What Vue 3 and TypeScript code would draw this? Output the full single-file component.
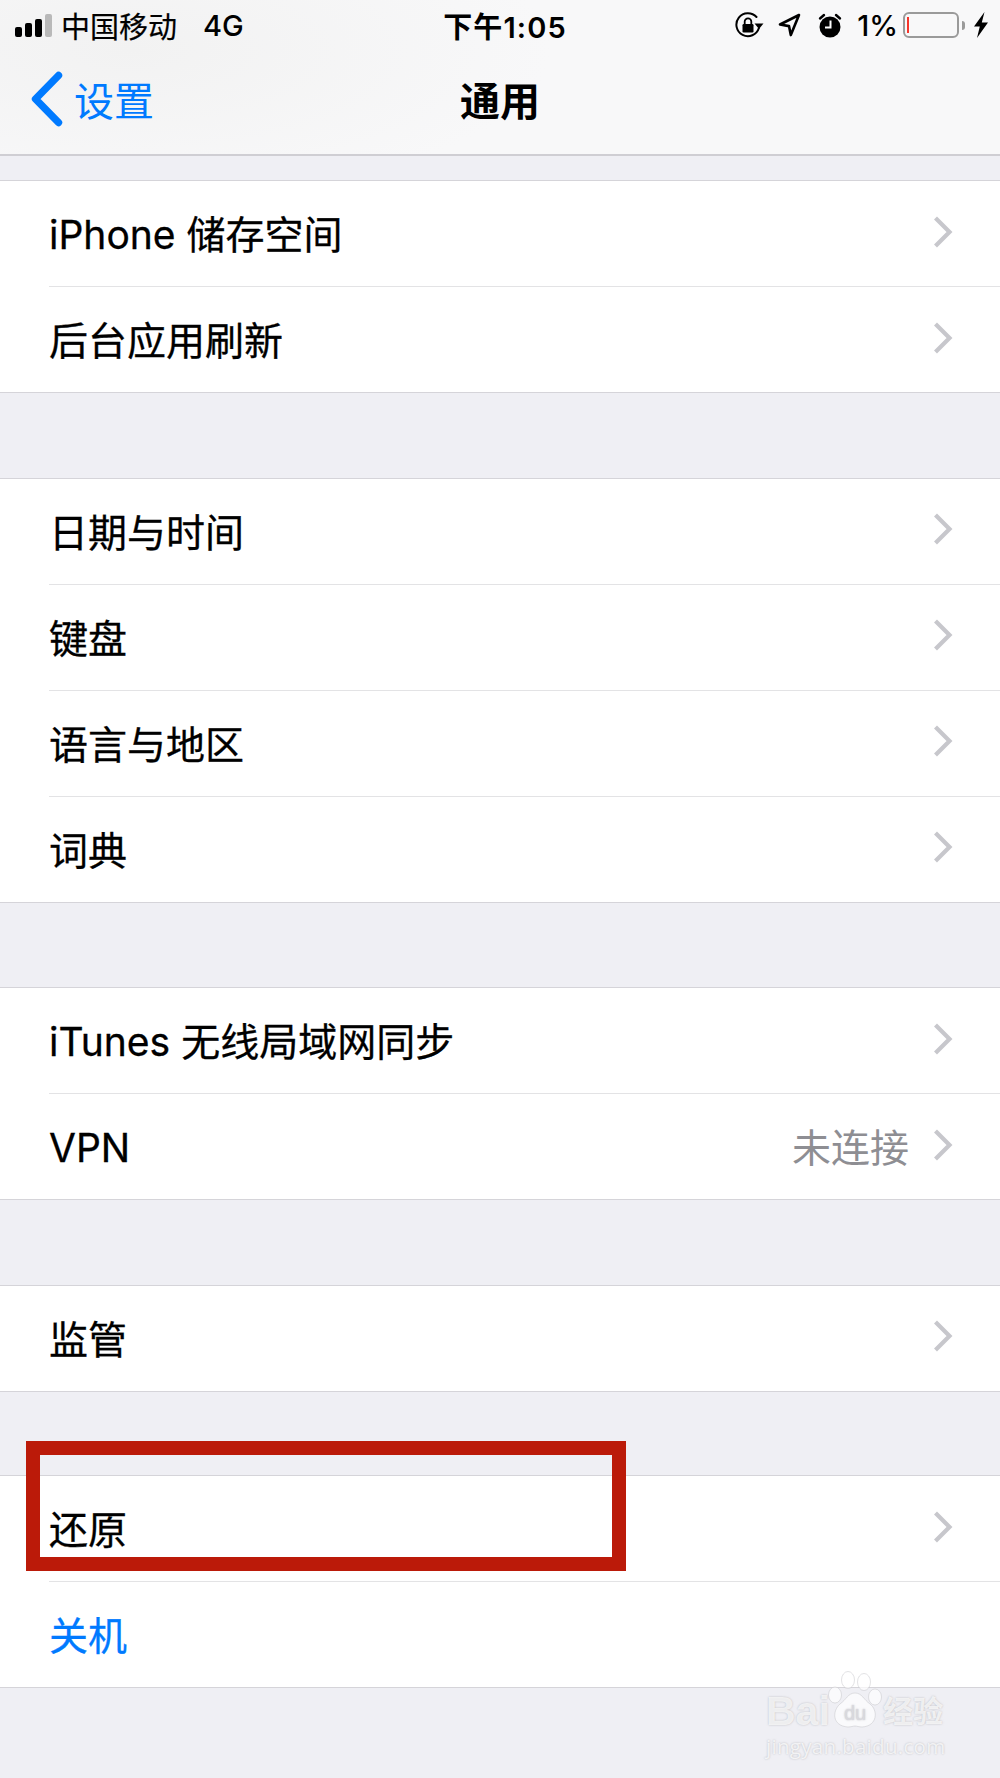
<script setup lang="ts">
interface Row {
  label: string;
  value?: string;
  link?: boolean;
}

const groups: Row[][] = [
  [{ label: "iPhone 储存空间" }, { label: "后台应用刷新" }],
  [{ label: "日期与时间" }, { label: "键盘" }, { label: "语言与地区" }, { label: "词典" }],
  [{ label: "iTunes 无线局域网同步" }, { label: "VPN", value: "未连接" }],
  [{ label: "监管" }],
  [{ label: "还原" }, { label: "关机", link: true }],
];
</script>

<template>
  <div class="page">
    <header class="top">
      <div class="status">
        <div class="status-left">
          <span class="signal">
            <i class="b1"></i><i class="b2"></i><i class="b3"></i><i class="b4"></i>
          </span>
          <span class="carrier">中国移动</span>
          <span class="net">4G</span>
        </div>
        <div class="clock">下午1:05</div>
        <div class="status-right">
          <svg class="ic-lock" width="29" height="26" viewBox="0 0 29 26" fill="none">
            <path d="M21.5 5A11.5 11.5 0 1 0 23.9 16" stroke="#000" stroke-width="2" stroke-linecap="round" />
            <path d="M19.5 11.5h9l-4.5 5.5z" fill="#000" />
            <rect x="7.5" y="12" width="11" height="8.5" rx="1.2" fill="#000" />
            <path d="M9.7 12V9.6a3.3 3.3 0 0 1 6.6 0V12" stroke="#000" stroke-width="1.8" />
          </svg>
          <svg class="ic-loc" width="23" height="24" viewBox="0 0 23 24" fill="none">
            <path d="M21 2 2 11.5l9 1.6 1.8 9z" stroke="#000" stroke-width="2.6" stroke-linejoin="round" />
          </svg>
          <svg class="ic-alarm" width="24" height="25" viewBox="0 0 24 25">
            <circle cx="12" cy="14" r="10.5" fill="#000" />
            <path d="M2 5.5 6 2M22 5.5 18 2" stroke="#000" stroke-width="2.4" stroke-linecap="round" />
            <path d="M12.5 7.5v7H7" stroke="#fff" stroke-width="2" fill="none" />
          </svg>
          <span class="percent">1%</span>
          <span class="battery"><i class="level"></i></span>
          <span class="nub"></span>
          <svg class="ic-bolt" width="16" height="26" viewBox="0 0 16 26">
            <path d="M11.5 0 1 14.5h5.8L4 26 15 10.5H8.800z" fill="#000" />
          </svg>
        </div>
      </div>
      <nav class="nav">
        <div class="back">
          <svg width="34" height="56" viewBox="0 0 34 56" fill="none">
            <path d="M28.5 4.5 5.5 28l23 23.5" stroke="#007aff" stroke-width="7.4" stroke-linecap="round" stroke-linejoin="round" />
          </svg>
          <span>设置</span>
        </div>
        <div class="title">通用</div>
        <div></div>
      </nav>
    </header>

    <main class="list">
      <section v-for="(group, i) in groups" :key="i" class="group">
        <div v-for="row in group" :key="row.label" class="row">
          <div class="row-inner">
            <span class="label" :class="{ link: row.link }">{{ row.label }}</span>
            <span v-if="row.value" class="value">{{ row.value }}</span>
            <svg v-if="!row.link" class="chevron" width="20" height="34" viewBox="0 0 20 34" fill="none">
              <path d="M2.5 3l14 14-14 14" stroke="#c7c7cc" stroke-width="4.2" />
            </svg>
          </div>
        </div>
      </section>
    </main>

    <div class="highlight"></div>

    <div class="mark">
      <div class="mark-top">
        <span class="mark-bai">Bai</span>
        <svg class="mark-paw" width="56" height="62" viewBox="0 0 56 62">
          <ellipse cx="7" cy="27" rx="6.5" ry="8" />
          <ellipse cx="20" cy="12" rx="6.5" ry="8.5" />
          <ellipse cx="36" cy="14" rx="6.5" ry="8.5" />
          <ellipse cx="47" cy="29" rx="6.5" ry="8" />
          <path d="M27 25c7 0 9 7 15 11 8 6 8 22-8 23-3 0-5-1-7-1s-4 1-7 1C4 58 4 43 12 36c6-4 8-11 15-11z" />
          <text x="27" y="52" text-anchor="middle">du</text>
        </svg>
        <span class="mark-cn">经验</span>
      </div>
      <div class="mark-url">jingyan.baidu.com</div>
    </div>
  </div>
</template>

<style scoped>
.page {
  position: relative;
  width: 1000px;
  height: 1778px;
  overflow: hidden;
  background: #efeff4;
  font-family: Inter, "Noto Sans CJK SC", sans-serif;
  color: #000;
}
.top {
  height: 156px;
  box-sizing: border-box;
  border-bottom: 2px solid #cfced3;
  background: radial-gradient(ellipse 420px 150px at 130px 50px, #f2f2f2, #f8f8f9 100%);
}
.status {
  height: 50px;
  display: grid;
  grid-template-columns: 1fr auto 1fr;
  align-items: center;
  font-size: 29px;
}
.status-left {
  display: flex;
  align-items: center;
  padding-left: 15px;
}
.signal {
  display: flex;
  align-items: flex-end;
  gap: 3px;
  height: 24px;
  margin-right: 9px;
}
.signal i {
  display: block;
  width: 7px;
  border-radius: 2px;
  background: #000;
}
.signal .b1 { height: 10px; }
.signal .b2 { height: 14px; }
.signal .b3 { height: 18px; }
.signal .b4 { height: 23px; background: #b9b9b9; }
.carrier {
  -webkit-text-stroke: 0.2px currentColor;
}
.net {
  margin-left: 26px;
  font-weight: 500;
}
.clock {
  margin-left: 10px;
  font-weight: 600;
  font-size: 29px;
  letter-spacing: 1.1px;
}
.status-right {
  display: flex;
  align-items: center;
  justify-content: flex-end;
  padding-right: 11px;
}
.ic-loc { margin-left: 14px; }
.ic-alarm { margin-left: 17px; }
.percent {
  margin-left: 15px;
  font-weight: 500;
}
.battery {
  display: block;
  width: 56px;
  height: 26px;
  margin-left: 5px;
  box-sizing: border-box;
  border: 2px solid #9a9a9a;
  border-radius: 6px;
  padding: 3px 2px;
}
.level {
  display: block;
  width: 2px;
  height: 100%;
  background: #f5352b;
}
.nub {
  display: block;
  width: 3px;
  height: 9px;
  margin-left: 3px;
  background: #9a9a9a;
  border-radius: 0 3px 3px 0;
}
.ic-bolt { margin-left: 8px; }
.nav {
  height: 104px;
  box-sizing: border-box;
  padding-bottom: 7px;
  display: grid;
  grid-template-columns: 1fr auto 1fr;
  align-items: center;
}
.back {
  display: flex;
  align-items: center;
  gap: 10px;
  padding-left: 30px;
  color: #007aff;
  font-size: 40px;
}
.title {
  font-size: 40px;
  font-weight: 600;
}
.list {
  padding-top: 24px;
}
.group {
  margin-top: 84.5px;
  background: #fff;
  border-top: 1px solid #d5d4d9;
  border-bottom: 1px solid #d5d4d9;
}
.group:first-child {
  margin-top: 0;
}
.group:last-child {
  margin-top: 83.5px;
}
.row {
  padding-left: 49px;
}
.row-inner {
  display: flex;
  align-items: center;
  height: 105px;
  padding-right: 47px;
  border-bottom: 1px solid #e3e3e5;
}
.row:last-child .row-inner {
  border-bottom: 0;
}
.label {
  flex: 1;
  padding-top: 3px;
  font-size: 39px;
  line-height: 50px;
  font-weight: 400;
  -webkit-text-stroke: 0.3px currentColor;
}
.link {
  color: #007aff;
}
.value {
  margin-right: 24px;
  padding-top: 2px;
  color: #8e8e93;
  font-size: 39px;
  line-height: 50px;
}
.chevron {
  margin-top: -4px;
}
.highlight {
  position: absolute;
  left: 26px;
  top: 1441px;
  width: 600px;
  height: 130px;
  box-sizing: border-box;
  border: 14px solid #bb1a09;
}
.mark {
  position: absolute;
  left: 766px;
  top: 1668px;
  width: 190px;
  color: rgba(255, 255, 255, 0.75);
  text-shadow: 0 0 2px rgba(150, 150, 155, 0.6);
}
.mark-top {
  display: flex;
  align-items: flex-end;
  height: 62px;
}
.mark-bai {
  font-family: "Liberation Sans", sans-serif;
  font-weight: 700;
  font-size: 41px;
  line-height: 38px;
  width: 62px;
}
.mark-paw {
  flex: none;
  fill: rgba(255, 255, 255, 0.7);
  stroke: rgba(190, 190, 196, 0.45);
  stroke-width: 1;
}
.mark-paw text {
  font-family: "Liberation Sans", sans-serif;
  font-size: 20px;
  fill: #d9d9de;
  stroke: none;
}
.mark-cn {
  margin-left: -1px;
  font-size: 30px;
  line-height: 38px;
  font-weight: 700;
}
.mark-url {
  margin-top: 3px;
  font-family: "Open Sans", sans-serif;
  font-size: 20.5px;
  line-height: 26px;
  letter-spacing: 0.3px;
}
</style>
